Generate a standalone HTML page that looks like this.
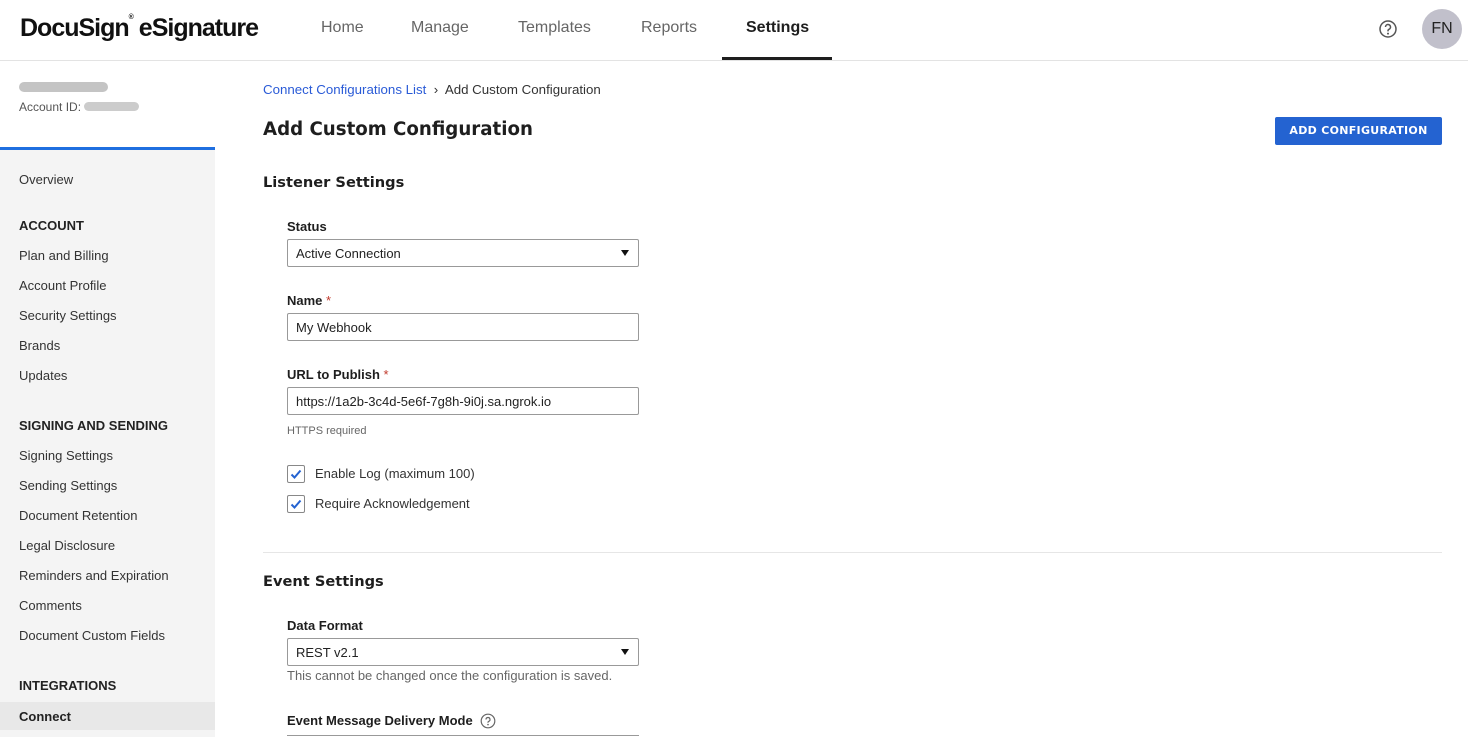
<!DOCTYPE html>
<html><head><style>
*{margin:0;padding:0;box-sizing:border-box}
body{width:1468px;height:737px;overflow:hidden;background:#fff;font-family:"Liberation Sans",sans-serif;color:#1e1e1e;position:relative}
.a{position:absolute;white-space:nowrap}
.nav{font-size:16px;color:#666;top:19px}
.side{position:absolute;left:0;top:150px;width:215px;height:587px;background:#f4f4f4}
.si{font-size:13px;color:#333;left:19px}
.sh{font-size:13px;font-weight:bold;color:#222;left:19px}
.lbl{font-size:13px;font-weight:bold;left:287px;color:#1e1e1e}
.req{color:#c0392b;font-weight:normal}
.inp{position:absolute;left:287px;width:352px;height:28px;border:1px solid #999;border-radius:2px;font-size:13px;padding:6px 8px;color:#222;background:#fff}
.arr{position:absolute;right:9px;top:10px;width:0;height:0;border-left:4px solid transparent;border-right:4px solid transparent;border-top:6px solid #111}
.cb{position:absolute;left:287px;width:18px;height:18px;border:1px solid #888;border-radius:2px;background:#fff}
.h2{font-family:"DejaVu Sans",sans-serif;font-weight:bold;font-size:14.6px;left:263px}
</style></head><body>
<div class="a" style="left:20px;top:14px;font-size:25px;font-weight:bold;letter-spacing:-1px;color:#111">DocuSign<span style="font-size:7px;vertical-align:top">®</span> eSignature</div>
<div class="a nav" style="left:321px">Home</div>
<div class="a nav" style="left:411px">Manage</div>
<div class="a nav" style="left:518px">Templates</div>
<div class="a nav" style="left:641px">Reports</div>
<div class="a nav" style="left:746px;color:#1e1e1e;font-weight:bold">Settings</div>
<div class="a" style="left:722px;top:57px;width:110px;height:3px;background:#1e1e1e"></div>
<div class="a" style="left:0;top:60px;width:1468px;height:1px;background:#e3e3e3"></div>
<svg class="a" style="left:1378px;top:19px" width="20" height="20" viewBox="0 0 20 20"><circle cx="10" cy="10" r="8" fill="none" stroke="#555" stroke-width="1.5"/><path d="M7.5 8a2.5 2.5 0 1 1 3.5 2.3c-.7.3-1 .8-1 1.5v.6" fill="none" stroke="#555" stroke-width="1.5"/><circle cx="10" cy="14.6" r="1" fill="#555"/></svg>
<div class="a" style="left:1422px;top:9px;width:40px;height:40px;border-radius:50%;background:#c1c0cb;font-size:16px;text-align:center;line-height:40px;color:#222">FN</div>

<div class="a" style="left:19px;top:82px;width:89px;height:10px;background:#c4c4c4;border-radius:5px"></div>
<div class="a" style="left:19px;top:100px;font-size:12px;color:#555">Account ID: <span style="display:inline-block;width:55px;height:9px;background:#ccc;border-radius:5px"></span></div>
<div class="a" style="left:0;top:147px;width:215px;height:3px;background:#1f6fe0"></div>
<div class="side"></div>
<div class="a si" style="top:172px">Overview</div>
<div class="a sh" style="top:218px">ACCOUNT</div>
<div class="a si" style="top:248px">Plan and Billing</div>
<div class="a si" style="top:278px">Account Profile</div>
<div class="a si" style="top:308px">Security Settings</div>
<div class="a si" style="top:338px">Brands</div>
<div class="a si" style="top:368px">Updates</div>
<div class="a sh" style="top:418px">SIGNING AND SENDING</div>
<div class="a si" style="top:448px">Signing Settings</div>
<div class="a si" style="top:478px">Sending Settings</div>
<div class="a si" style="top:508px">Document Retention</div>
<div class="a si" style="top:538px">Legal Disclosure</div>
<div class="a si" style="top:568px">Reminders and Expiration</div>
<div class="a si" style="top:598px">Comments</div>
<div class="a si" style="top:628px">Document Custom Fields</div>
<div class="a sh" style="top:678px">INTEGRATIONS</div>
<div class="a" style="left:0;top:702px;width:215px;height:28px;background:#e8e8e8"></div>
<div class="a sh" style="top:709px">Connect</div>

<div class="a" style="left:263px;top:82px;font-size:13.3px;color:#2a5bd7">Connect Configurations List <span style="color:#333">&nbsp;›&nbsp; Add Custom Configuration</span></div>
<div class="a" style="left:263px;top:119px;font-family:'DejaVu Sans',sans-serif;font-weight:bold;font-size:18.2px;color:#1e1e1e">Add Custom Configuration</div>
<div class="a" style="left:1275px;top:117px;width:167px;height:28px;background:#2463d1;border-radius:2px;color:#fff;font-family:'DejaVu Sans',sans-serif;font-weight:bold;font-size:11px;text-align:center;line-height:28px;letter-spacing:.3px">ADD CONFIGURATION</div>
<div class="a h2" style="top:174px">Listener Settings</div>
<div class="a lbl" style="top:219px">Status</div>
<div class="inp" style="top:239px">Active Connection<div class="arr"></div></div>
<div class="a lbl" style="top:293px">Name <span class="req">*</span></div>
<div class="inp" style="top:313px">My Webhook</div>
<div class="a lbl" style="top:367px">URL to Publish <span class="req">*</span></div>
<div class="inp" style="top:387px">https://1a2b-3c4d-5e6f-7g8h-9i0j.sa.ngrok.io</div>
<div class="a" style="left:287px;top:425px;font-size:11px;color:#666">HTTPS required</div>
<div class="cb" style="top:465px"><svg width="16" height="16" viewBox="0 0 16 16"><path d="M3.5 8.5l3 3 6-7" fill="none" stroke="#2463d1" stroke-width="2"/></svg></div>
<div class="a" style="left:315px;top:466px;font-size:13px;color:#333">Enable Log (maximum 100)</div>
<div class="cb" style="top:495px"><svg width="16" height="16" viewBox="0 0 16 16"><path d="M3.5 8.5l3 3 6-7" fill="none" stroke="#2463d1" stroke-width="2"/></svg></div>
<div class="a" style="left:315px;top:496px;font-size:13px;color:#333">Require Acknowledgement</div>
<div class="a" style="left:263px;top:552px;width:1179px;height:1px;background:#e6e6e6"></div>
<div class="a h2" style="top:573px">Event Settings</div>
<div class="a lbl" style="top:618px">Data Format</div>
<div class="inp" style="top:638px">REST v2.1<div class="arr"></div></div>
<div class="a" style="left:287px;top:668px;font-size:13px;color:#666">This cannot be changed once the configuration is saved.</div>
<div class="a lbl" style="top:713px">Event Message Delivery Mode</div>
<svg class="a" style="left:480px;top:713px" width="16" height="16" viewBox="0 0 16 16"><circle cx="8" cy="8" r="6.8" fill="none" stroke="#666" stroke-width="1.2"/><path d="M6 6.5a2 2 0 1 1 2.6 1.9c-.4.2-.6.5-.6 1v.4" fill="none" stroke="#666" stroke-width="1.2"/><circle cx="8" cy="11.6" r=".8" fill="#666"/></svg>
<div class="a" style="left:287px;top:735px;width:352px;height:2px;border-top:1px solid #999"></div>
</body></html>
